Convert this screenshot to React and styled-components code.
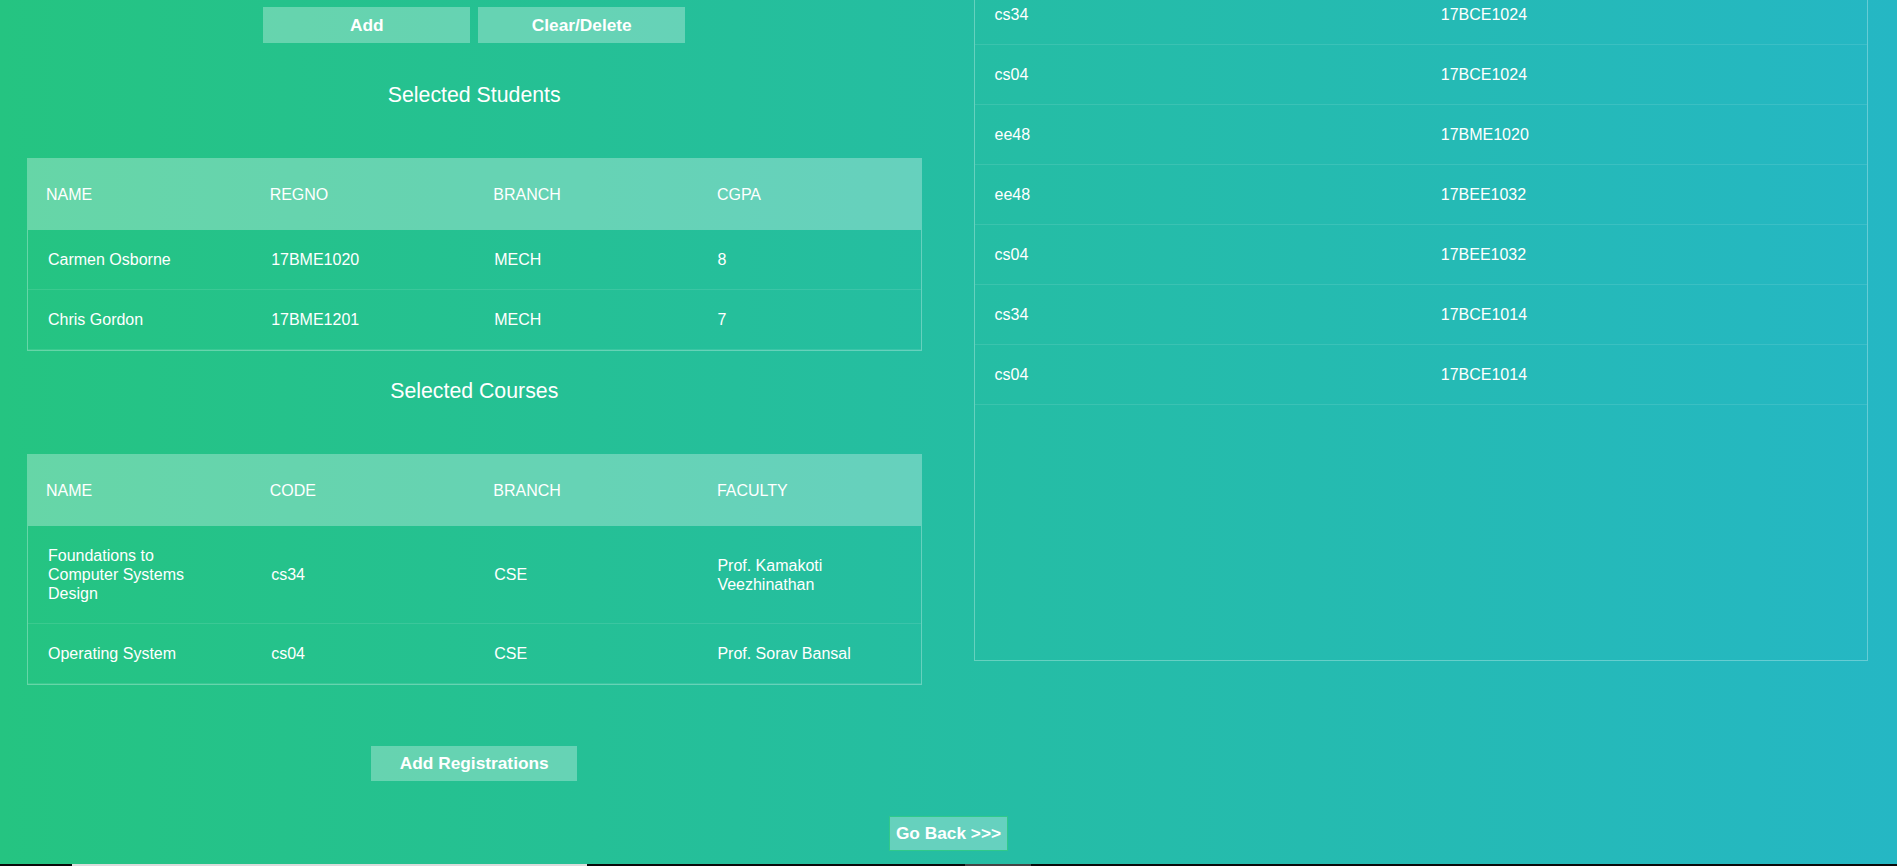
import React from "react";
import styled, { createGlobalStyle } from "styled-components";

const students = [
   { name: "Carmen Osborne", regno: "17BME1020", branch: "MECH", cgpa: "8" },
   { name: "Chris Gordon", regno: "17BME1201", branch: "MECH", cgpa: "7" },
];

const courses = [
   {
      name: "Foundations to Computer Systems Design",
      code: "cs34",
      branch: "CSE",
      faculty: "Prof. Kamakoti Veezhinathan",
   },
   { name: "Operating System", code: "cs04", branch: "CSE", faculty: "Prof. Sorav Bansal" },
];

const registrations = [
   ["cs34", "17BCE1024"],
   ["cs04", "17BCE1024"],
   ["ee48", "17BME1020"],
   ["ee48", "17BEE1032"],
   ["cs04", "17BEE1032"],
   ["cs34", "17BCE1014"],
   ["cs04", "17BCE1014"],
];

function DataTable({ headers, rows }) {
   return (
      <TableWrap>
         <HeaderTable>
            <thead>
               <tr>
                  {headers.map((h) => (
                     <th key={h}>{h}</th>
                  ))}
               </tr>
            </thead>
         </HeaderTable>
         <ContentBox>
            <BodyTable>
               <tbody>
                  {rows.map((row, i) => (
                     <tr key={i}>
                        {row.map((cell, j) => (
                           <td key={j}>{cell}</td>
                        ))}
                     </tr>
                  ))}
               </tbody>
            </BodyTable>
         </ContentBox>
      </TableWrap>
   );
}

function App() {
   return (
      <>
         <GlobalStyle />
         <Page>
            <Columns>
               <LeftCol>
                  <ButtonRow>
                     <ActionButton $w={207} $h={36}>
                        Add
                     </ActionButton>
                     <ActionButton $w={207} $h={36}>
                        Clear/Delete
                     </ActionButton>
                  </ButtonRow>
                  <Title $top={41}>Selected Students</Title>
                  <DataTable
                     headers={["Name", "Regno", "Branch", "CGPA"]}
                     rows={students.map((s) => [s.name, s.regno, s.branch, s.cgpa])}
                  />
                  <Title $top={29}>Selected Courses</Title>
                  <DataTable
                     headers={["Name", "Code", "Branch", "Faculty"]}
                     rows={courses.map((c) => [c.name, c.code, c.branch, c.faculty])}
                  />
                  <ActionButton $w={206} $h={35} $top={61}>
                     Add Registrations
                  </ActionButton>
               </LeftCol>
               <RightCol>
                  <RegBox>
                     <BodyTable>
                        <tbody>
                           {registrations.map(([code, regno], i) => (
                              <tr key={i}>
                                 <td>{code}</td>
                                 <td>{regno}</td>
                              </tr>
                           ))}
                        </tbody>
                     </BodyTable>
                  </RegBox>
               </RightCol>
            </Columns>
            <BackButton>Go Back &gt;&gt;&gt;</BackButton>
            <BottomStrip>
               <StripPiece $left={72} $width={515} $color="#dcdcdc" />
               <StripPiece $left={378} $width={66} $color="#444" />
            </BottomStrip>
         </Page>
      </>
   );
}

export default App;

const GlobalStyle = createGlobalStyle`
   * {
      box-sizing: border-box;
   }
   html, body {
      margin: 0;
      height: 100%;
      overflow: hidden;
   }
   body {
      font-family: "Liberation Sans", Arial, sans-serif;
      color: #fff;
      background: linear-gradient(to right, #25c481, #25b7c4);
   }
`;

const Page = styled.div`
   height: 100vh;
   display: flex;
   flex-direction: column;
   align-items: center;
`;

const Columns = styled.div`
   width: 100%;
   display: grid;
   grid-template-columns: 1fr 1fr;
   align-items: start;
`;

const LeftCol = styled.div`
   padding: 7px 27px 0;
   display: flex;
   flex-direction: column;
   align-items: center;
`;

const RightCol = styled.div`
   padding: 0 29px 0 25px;
   margin-top: -16px;
`;

const ButtonRow = styled.div`
   display: flex;
   gap: 8px;
`;

const ActionButton = styled.button`
   width: ${(p) => p.$w}px;
   height: ${(p) => p.$h}px;
   margin-top: ${(p) => p.$top || 0}px;
   padding: 0;
   border: none;
   background-color: rgba(255, 255, 255, 0.3);
   color: #fff;
   font-family: "Liberation Sans", Arial, sans-serif;
   font-size: 17.3px;
   font-weight: bold;
   cursor: pointer;
`;

const BackButton = styled(ActionButton)`
   width: 119px;
   height: 35px;
   margin-top: 35px;
   border: 1px solid #30c98a;
`;

const Title = styled.h2`
   margin: ${(p) => p.$top}px 0 51px;
   font-size: 21.3px;
   line-height: 23px;
   font-weight: normal;
   text-align: center;
`;

const TableWrap = styled.div`
   width: 100%;
`;

const HeaderTable = styled.table`
   width: 100%;
   table-layout: fixed;
   border-collapse: collapse;
   background-color: rgba(255, 255, 255, 0.3);
   th {
      padding: 26.5px 20px 26.5px 19px;
      text-align: left;
      font-weight: normal;
      font-size: 16px;
      line-height: 19px;
      text-transform: uppercase;
      color: #fff;
   }
`;

const ContentBox = styled.div`
   border: 1px solid rgba(255, 255, 255, 0.3);
   border-top: none;
`;

const RegBox = styled.div`
   height: 677px;
   border: 1px solid rgba(255, 255, 255, 0.3);
`;

const BodyTable = styled.table`
   width: 100%;
   table-layout: fixed;
   border-collapse: collapse;
   td {
      padding: 20px 45px 20px 20px;
      text-align: left;
      vertical-align: middle;
      font-size: 16px;
      line-height: 19px;
      color: #fff;
      border-bottom: 1px solid rgba(255, 255, 255, 0.1);
   }
`;

const BottomStrip = styled.div`
   margin-top: auto;
   width: 100%;
   height: 2px;
   background: #0a0a0a;
   display: flex;
`;

const StripPiece = styled.div`
   margin-left: ${(p) => p.$left}px;
   width: ${(p) => p.$width}px;
   background: ${(p) => p.$color};
`;
